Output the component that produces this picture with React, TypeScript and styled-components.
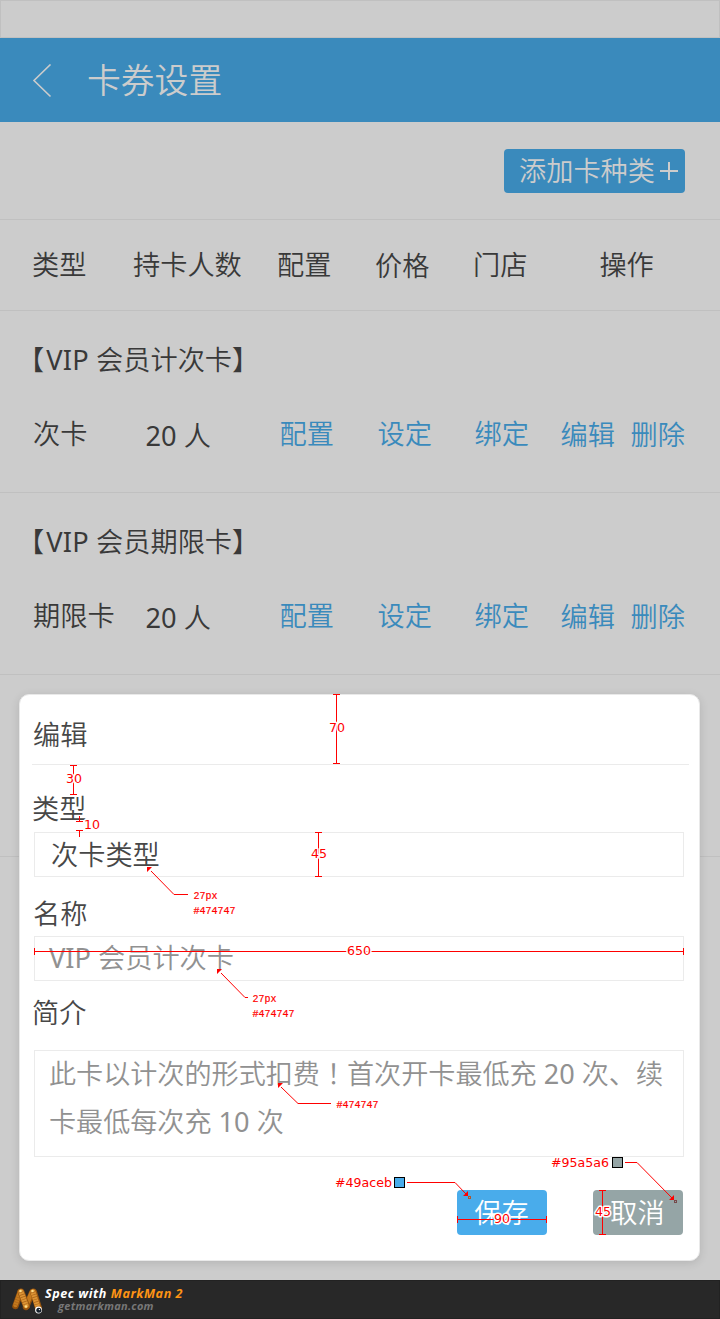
import React from "react";
import styled, { createGlobalStyle } from "styled-components";

const Global = createGlobalStyle`
  * { box-sizing: border-box; }
  body { margin: 0; background: #ccc; }
`;

const Screen = styled.div`
  position: relative;
  width: 720px;
  height: 1319px;
  overflow: hidden;
  display: flex;
  flex-direction: column;
  background: #cccccc;
  color: #393939;
  font: 27.2px/36px "Noto Sans", "Noto Sans CJK SC", sans-serif;
  font-weight: 350;
  white-space: nowrap;
`;

const StatusBar = styled.div`
  height: 38px;
  flex: none;
  border: 1px solid #c0c0c0;
`;

const NavBar = styled.header`
  height: 84px;
  flex: none;
  display: flex;
  align-items: center;
  padding: 1px 0 0 32px;
  gap: 35px;
  background: #3a8abc;
  color: #cccccc;
`;

const NavTitle = styled.h1`
  margin: -1px 0 0;
  font-size: 33.8px;
  line-height: 44px;
  font-weight: 350;
`;

const Toolbar = styled.div`
  height: 98px;
  flex: none;
  display: flex;
  justify-content: flex-end;
  padding: 27px 35px 0 0;
  border-bottom: 1px solid #c0c0c0;
`;

const AddButton = styled.button`
  width: 181px;
  height: 44px;
  display: flex;
  align-items: center;
  justify-content: space-between;
  padding: 0 7px 0 15px;
  border: 0;
  border-radius: 4px;
  background: #3a8abc;
  color: #cccccc;
  font: inherit;
`;

const Row = styled.div`
  display: grid;
  grid-template-columns: 101px 144px 98px 98px 1fr;
  padding-left: 32px;
`;

const HeadRow = styled(Row)`
  height: 91px;
  flex: none;
  align-items: center;
  border-bottom: 1px solid #c0c0c0;
`;

const Card = styled.section`
  height: 182px;
  flex: none;
  padding-top: 31px;
  border-bottom: 1px solid #c0c0c0;
`;

const CardName = styled.h2`
  margin: 0 0 38px 17px;
  font: inherit;
`;

const CardRow = styled(Row)`
  grid-template-columns: 113px 134px 98px 97px 86px 70px 1fr;
  padding-left: 33px;
`;

const Latin = styled.span<{ $before?: number; $spacing?: number }>`
  margin-left: ${(p) => p.$before ?? 0}px;
  font-weight: 400;
  letter-spacing: ${(p) => p.$spacing ?? 0}px;
`;

const Centered = styled.span`
  font-family: "Noto Sans CJK TC", sans-serif;
`;

const HeadCell = styled.span<{ $left?: number; $top?: number }>`
  padding-left: ${(p) => p.$left ?? 0}px;
  padding-top: ${(p) => p.$top ?? 0}px;
`;

const Action = styled.a<{ $top?: number }>`
  margin-left: -0.4px;
  color: #3a8abc;
  padding-top: ${(p) => p.$top ?? 0}px;
`;

const Dialog = styled.div`
  position: absolute;
  left: 19px;
  top: 694px;
  width: 681px;
  height: 567px;
  padding: 0 10px 0 13px;
  border: 1px solid #e9e9e9;
  border-radius: 10px;
  background: #fff;
  color: #474747;
  box-shadow: 0 2px 10px rgba(0, 0, 0, 0.12);
`;

const DialogTitle = styled.h3`
  height: 70px;
  margin: 0 0 0 -1px;
  padding: 22px 0 0 1px;
  border-bottom: 1px solid #ebebeb;
  font: inherit;
`;

const Label = styled.label<{ $top: number; $bottom: number; $left?: number }>`
  display: block;
  margin: ${(p) => p.$top}px 0 ${(p) => p.$bottom}px ${(p) => p.$left ?? 0}px;
`;

const Field = styled.div<{ $muted?: boolean }>`
  width: 650px;
  height: 45px;
  margin-left: 1px;
  padding-left: ${(p) => (p.$muted ? 14 : 16)}px;
  border: 1px solid #ebebeb;
  line-height: ${(p) => (p.$muted ? 42 : 44)}px;
  color: ${(p) => (p.$muted ? "#919191" : "#474747")};
`;

const TextArea = styled(Field)`
  height: 107px;
  line-height: 48px;
`;

const Paragraph = styled.p`
  margin: -2px 0 0;
  font-size: 27.1px;
`;

const Buttons = styled.div`
  display: flex;
  justify-content: flex-end;
  gap: 46px;
  margin: 33px 6px 0 0;
`;

const Button = styled.button<{ $color: string }>`
  width: 90px;
  height: 45px;
  padding: 0 1px 0 0;
  border: 0;
  border-radius: 4px;
  background: ${(p) => p.$color};
  color: #fff;
  font: inherit;
`;

const Footer = styled.footer`
  height: 39px;
  margin-top: auto;
  flex: none;
  display: flex;
  gap: 1px;
  padding: 3px 0 0 8px;
  background: #282828;
  border: 1px solid #222;
  font-family: "Open Sans", "Noto Sans", sans-serif;
  font-style: italic;
  font-weight: 700;
`;

const Credit = styled.div`
  display: flex;
  flex-direction: column;
  padding-top: 3px;
  color: #fff;
  font-size: 12.6px;
  line-height: 13px;
  letter-spacing: 0.55px;
`;

const Brand = styled.span`
  color: #ff9414;
`;

const Site = styled.span`
  padding-left: 13px;
  color: #777;
  font-size: 11px;
  line-height: 12px;
  letter-spacing: 0.28px;
`;

const Overlay = styled.svg`
  position: absolute;
  left: 0;
  top: 0;
  pointer-events: none;
`;

const Mark = styled.text`
  font: 400 12.6px "DejaVu Sans", sans-serif;
  fill: #f00;
  stroke: #fff;
  stroke-width: 3px;
  stroke-linejoin: round;
  paint-order: stroke;
`;

const Spec = styled.text`
  font: 400 10px "Liberation Mono", monospace;
  fill: #f00;
  stroke: #f00;
  stroke-width: 0.2px;
`;

function Worm() {
  return (
    <svg width="35" height="34" viewBox="0 0 35 34" fill="none" strokeLinecap="round">
      <path d="M6.500 22L11.500 8M17 23L23.500 8" stroke="#8f4e0c" strokeWidth="6.5" />
      <path d="M6.500 21L11 8M17 22L23 8" stroke="#c47a1e" strokeWidth="4.5" />
      <path d="M12 8L17.500 22M24.500 8L29.500 24" stroke="#9a560f" strokeWidth="7" />
      <path d="M12 8L17 21.500M24 8L29 23.500" stroke="#dc9434" strokeWidth="5.2" />
      <path
        d="M12 8L17 22M24 8L29 24M6.500 21L10 12"
        stroke="#a9631a"
        strokeWidth="5.2"
        strokeDasharray="0.7 1.8"
        strokeLinecap="butt"
      />
      <g fill="#ffe08a">
        <circle cx="11.5" cy="7" r="1.2" />
        <circle cx="23.5" cy="7" r="1.2" />
        <circle cx="17" cy="22.5" r="1.2" />
      </g>
      <circle cx="29.5" cy="26" r="3.4" fill="#fff" />
      <circle cx="29.8" cy="26.2" r="2.5" fill="#16202a" />
      <circle cx="30.4" cy="25.6" r="0.7" fill="#fff" />
    </svg>
  );
}

function Annotations() {
  return (
    <Overlay width="720" height="1319" viewBox="0 0 720 1319">
      <g stroke="#f00" fill="none" shapeRendering="crispEdges">
        <path d="M333 694.5H340M336.5 695V763M333 763.5H340" />
        <path d="M70 765.5H77M73.5 765V795M70 794.5H77" />
        <path d="M76 821.5H83M79.5 816V821M76 830.5H83M79.5 830V837" />
        <path d="M315 832.5H322M318.5 833V877M315 876.5H322" />
        <path d="M34.5 948V955M683.5 948V955M34 951.5H684" />
        <path d="M457.5 1216V1223M546.5 1216V1223M457 1219.5H547" />
        <path d="M599 1190.5H606M602.5 1191V1235M599 1234.5H606" />
        <path d="M174 894.5H188M245 997.5H248M298 1103.5H331M407 1182.5H455M625 1162.5H637" />
      </g>
      <path d="M151 871L174 894.5M221 973L245 997.5M281 1087L298 1103.5M455 1182.5L466 1194M637 1162.5L673 1199" stroke="#f00" fill="none" />
      <path d="M147 867h5l-5 5zM217 969h5l-5 5zM278 1083h5l-5 5zM468 1196v-5l-5 5zM674 1200v-5l-5 5z" fill="#f00" />
      <rect x="468.500" y="1196.500" width="2" height="2" stroke="#b0562c" fill="none" />
      <rect x="674.500" y="1200.500" width="2" height="2" stroke="#76494a" fill="none" />
      <rect x="394.500" y="1177.500" width="10" height="10" stroke="#000" fill="#49aceb" />
      <rect x="612.500" y="1157.500" width="10" height="10" stroke="#000" fill="#95a5a6" />
      <Mark x="329" y="732">70</Mark>
      <Mark x="66" y="783">30</Mark>
      <Mark x="84" y="829">10</Mark>
      <Mark x="311" y="858">45</Mark>
      <Mark x="347" y="955">650</Mark>
      <Mark x="494" y="1223">90</Mark>
      <Mark x="595" y="1216">45</Mark>
      <Mark x="335" y="1187">#49aceb</Mark>
      <Mark x="551" y="1167">#95a5a6</Mark>
      <Spec x="193.500" y="899">27px</Spec>
      <Spec x="193.500" y="914">#474747</Spec>
      <Spec x="252.500" y="1002">27px</Spec>
      <Spec x="252.500" y="1017">#474747</Spec>
      <Spec x="336.500" y="1108">#474747</Spec>
    </Overlay>
  );
}

const cards = [
  { name: "会员计次卡", type: "次卡", people: 20 },
  { name: "会员期限卡", type: "期限卡", people: 20 },
];

export default function App() {
  return (
    <>
      <Global />
      <Screen>
        <StatusBar />
        <NavBar>
          <svg width="20" height="34" viewBox="0 0 20 34" fill="none" stroke="#ccc" strokeWidth="1.6">
            <path d="M18.500 0.500L2 16.500L18.500 32.500" />
          </svg>
          <NavTitle>卡券设置</NavTitle>
        </NavBar>
        <Toolbar>
          <AddButton>
            添加卡种类
            <svg width="18" height="18" stroke="#ccc" strokeWidth="2">
              <path d="M9 0V18M0 9H18" />
            </svg>
          </AddButton>
        </Toolbar>
        <HeadRow>
          <HeadCell>类型</HeadCell>
          <HeadCell>持卡人数</HeadCell>
          <HeadCell>配置</HeadCell>
          <HeadCell $top={1}>价格</HeadCell>
          <HeadCell>
            门店<HeadCell $left={72}>操作</HeadCell>
          </HeadCell>
        </HeadRow>
        {cards.map((c) => (
          <Card key={c.name}>
            <CardName>
              【<Latin $before={2} $spacing={0.2}>VIP </Latin>
              {c.name}】
            </CardName>
            <CardRow>
              <span>{c.type}</span>
              <HeadCell $top={2}>
                <Latin $before={-0.5}>{c.people} </Latin>人
              </HeadCell>
              <Action>配置</Action>
              <Action>设定</Action>
              <Action>绑定</Action>
              <Action $top={1}>编辑</Action>
              <Action $top={1}>删除</Action>
            </CardRow>
          </Card>
        ))}
        <Card />
        <Footer>
          <Worm />
          <Credit>
            <span>
              Spec with <Brand>MarkMan 2</Brand>
            </span>
            <Site>getmarkman.com</Site>
          </Credit>
        </Footer>
        <Dialog>
          <DialogTitle>编辑</DialogTitle>
          <Label $top={26} $bottom={5} $left={-1}>类型</Label>
          <Field>次卡类型</Field>
          <Label $top={19} $bottom={4}>名称</Label>
          <Field $muted>
            <Latin>VIP </Latin>会员计次卡
          </Field>
          <Label $top={14} $bottom={19} $left={-1}>简介</Label>
          <TextArea $muted>
            <Paragraph>
              此卡以计次的形式扣费<Centered>！</Centered>首次开卡最低充<Latin> 20 </Latin>次、续
              <br />
              卡最低每次充<Latin> 10 </Latin>次
            </Paragraph>
          </TextArea>
          <Buttons>
            <Button $color="#49aceb">保存</Button>
            <Button $color="#95a5a6">取消</Button>
          </Buttons>
        </Dialog>
        <Annotations />
      </Screen>
    </>
  );
}
